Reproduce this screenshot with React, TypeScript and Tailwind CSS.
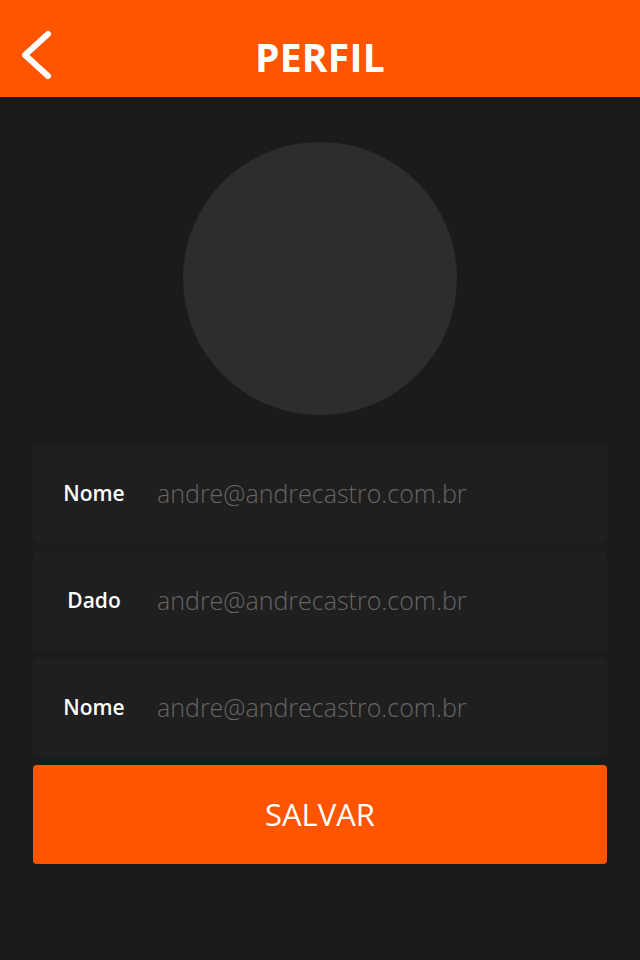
const fields = [
	{ label: "Nome", value: "andre@andrecastro.com.br" },
	{ label: "Dado", value: "andre@andrecastro.com.br" },
	{ label: "Nome", value: "andre@andrecastro.com.br" },
];

export default function App() {
	return (
		<div className="min-h-[960px] w-[640px] bg-[#1b1b1b] font-['Open_Sans',sans-serif]">
			<header className="relative h-[97px] bg-[#ff5400] flex items-center justify-center pt-[16px]">
				<button className="absolute left-[18px] top-[27px] w-[36px] h-[56px]">
					<svg width="36" height="56" viewBox="0 0 36 56">
						<path
							d="M30 7 L7 28 L30 49"
							fill="none"
							stroke="white"
							strokeWidth="6"
							strokeLinecap="round"
							strokeLinejoin="round"
						/>
					</svg>
				</button>
				<h1 className="text-white font-bold text-[39px] leading-none tracking-[0.3px]">PERFIL</h1>
			</header>

			<main className="flex flex-col items-center pt-[45px] px-[33px]">
				<div className="w-[274px] h-[273px] rounded-full bg-[#2d2d2d]" />

				<div className="mt-[29px] w-full flex flex-col gap-[8px]">
					{fields.map((f, i) => (
						<div key={i} className="h-[99px] rounded-[4px] bg-[#1f1f1f] flex items-center">
							<span className="w-[122px] text-center text-white font-semibold text-[21px]">{f.label}</span>
							<span className="ml-[2px] text-[#666666] font-light text-[25px]">{f.value}</span>
						</div>
					))}
					<button className="h-[99px] rounded-[4px] bg-[#ff5400] text-white text-[31px] flex items-center justify-center">
						SALVAR
					</button>
				</div>
			</main>
		</div>
	);
}
